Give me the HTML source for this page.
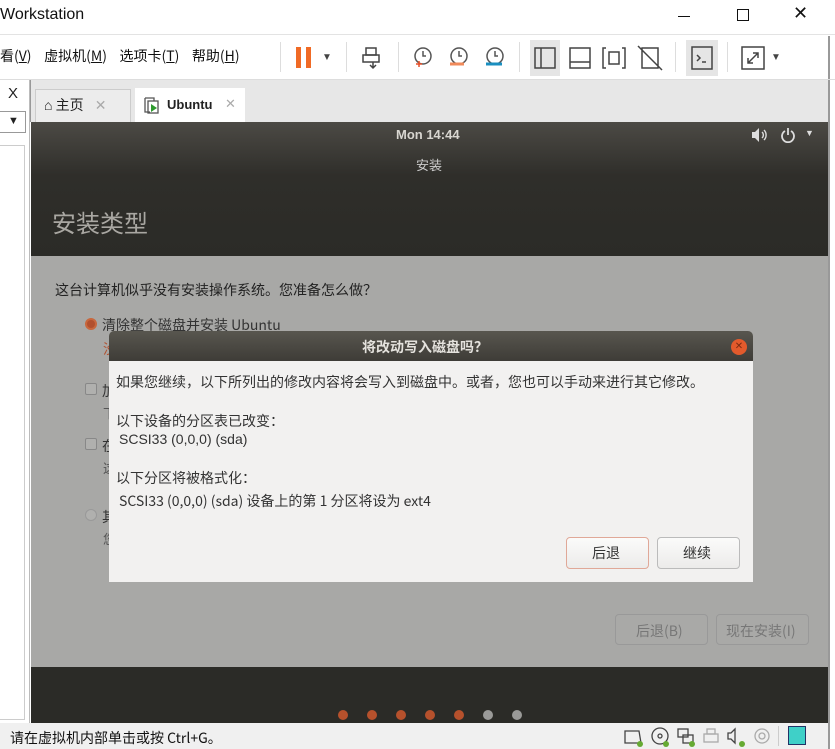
<!DOCTYPE html>
<html><head><meta charset="utf-8"><style>
*{margin:0;padding:0;box-sizing:border-box}
body{width:835px;height:749px;overflow:hidden;background:#fff;font-family:"Liberation Sans","Noto Sans CJK SC",sans-serif;position:relative;font-size:14px;color:#222}
.a{position:absolute}
.cn{font-family:"Noto Sans CJK SC",sans-serif}
</style></head><body>
<!-- title bar -->
<div class="a" style="left:0;top:0;width:835px;height:35px;background:#fff;border-bottom:1px solid #e3e3e3"></div>
<div class="a" style="left:0;top:6px;font-size:16px;color:#111">Workstation</div>
<div class="a" style="left:678px;top:16px;width:12px;height:1px;background:#111"></div>
<div class="a" style="left:737px;top:9px;width:12px;height:12px;border:1px solid #111"></div>
<div class="a" style="left:793px;top:3px;font-size:18px;color:#111">✕</div>
<!-- menu bar -->
<div class="a cn" style="left:0;top:46px;font-size:14px;color:#111;word-spacing:0">看(<u>V</u>)&nbsp;&nbsp;&nbsp;&nbsp;虚拟机(<u>M</u>)&nbsp;&nbsp;&nbsp;&nbsp;选项卡(<u>T</u>)&nbsp;&nbsp;&nbsp;&nbsp;帮助(<u>H</u>)</div>
<div class="a" style="left:280px;top:42px;width:1px;height:30px;background:#ddd"></div>
<div class="a" style="left:296px;top:47px;width:5px;height:21px;background:#f06a25"></div>
<div class="a" style="left:306px;top:47px;width:5px;height:21px;background:#f06a25"></div>
<div class="a" style="left:322px;top:52px;font-size:10px;color:#444">▼</div>
<div class="a" style="left:346px;top:42px;width:1px;height:30px;background:#ddd"></div>
<svg class="a" style="left:360px;top:44px" width="28" height="28" viewBox="0 0 28 28" fill="none" stroke="#444" stroke-width="1.5"><rect x="6" y="4" width="10" height="7"/><rect x="3" y="11" width="16" height="7"/><path d="M13 18v6M10 21l3 3 3-3"/></svg>
<div class="a" style="left:398px;top:42px;width:1px;height:30px;background:#ddd"></div>
<svg class="a" style="left:410px;top:45px" width="100" height="26" viewBox="0 0 100 26" fill="none" stroke-width="1.5"><circle cx="13" cy="11" r="8" stroke="#555"/><path d="M13 6v5h3" stroke="#555"/><path d="M6 19h6M9 16v6" stroke="#e8502a"/><circle cx="49" cy="11" r="8" stroke="#555"/><path d="M49 6v5h3" stroke="#555"/><path d="M40 19h14" stroke="#f08a5a" stroke-width="3"/><circle cx="85" cy="11" r="8" stroke="#555"/><path d="M85 6v5h3" stroke="#555"/><path d="M76 19h16" stroke="#1a8fc0" stroke-width="3"/></svg>
<div class="a" style="left:519px;top:42px;width:1px;height:30px;background:#ddd"></div>
<div class="a" style="left:530px;top:40px;width:30px;height:36px;background:#e5e5e5"></div>
<svg class="a" style="left:530px;top:44px" width="140" height="28" viewBox="0 0 140 28" fill="none" stroke="#444" stroke-width="1.5"><rect x="5" y="4" width="20" height="20"/><path d="M11 4v20"/><rect x="40" y="4" width="20" height="20"/><path d="M40 18h20"/><path d="M76 4h-3v20h3M92 4h3v20h-3"/><rect x="79" y="8" width="10" height="12"/><path d="M112 4h16v20h-16zM108 2l24 24" /></svg>
<div class="a" style="left:675px;top:42px;width:1px;height:30px;background:#ddd"></div>
<div class="a" style="left:686px;top:40px;width:32px;height:36px;background:#e5e5e5"></div>
<svg class="a" style="left:689px;top:44px" width="26" height="28" viewBox="0 0 26 28" fill="none" stroke="#444" stroke-width="1.5"><rect x="3" y="3" width="20" height="22"/><path d="M8 11l3 3-3 3M13 18h4"/></svg>
<div class="a" style="left:727px;top:42px;width:1px;height:30px;background:#ddd"></div>
<svg class="a" style="left:739px;top:44px" width="28" height="28" viewBox="0 0 28 28" fill="none" stroke="#444" stroke-width="1.5"><rect x="3" y="3" width="22" height="22"/><path d="M9 19l10-10M14 9h5v5M9 14v5h5"/></svg>
<div class="a" style="left:771px;top:52px;font-size:10px;color:#444">▼</div>
<div class="a" style="left:828px;top:36px;width:2px;height:713px;background:#999"></div>
<div class="a" style="left:0;top:79px;width:835px;height:1px;background:#ddd"></div>
<!-- left panel -->
<div class="a" style="left:0;top:80px;width:30px;height:643px;background:#fff;border-right:1px solid #bbb"></div>
<div class="a" style="left:8px;top:85px;font-size:15px;color:#222">X</div>
<div class="a" style="left:0;top:111px;width:26px;height:22px;border:1px solid #999;border-left:none"></div>
<div class="a" style="left:8px;top:115px;font-size:11px">▼</div>
<div class="a" style="left:0;top:145px;width:25px;height:575px;border:1px solid #ccc;border-left:none"></div>
<!-- tabs bar -->
<div class="a" style="left:30px;top:80px;width:798px;height:42px;background:#e7e7e7;border-left:1px solid #999"></div>
<div class="a" style="left:35px;top:89px;width:96px;height:33px;background:#ececec;border:1px solid #ccc;border-bottom:none"></div>
<div class="a cn" style="left:44px;top:95px;font-size:14px;color:#222">⌂ 主页 <span style="color:#aaa;margin-left:8px">✕</span></div>
<div class="a" style="left:135px;top:88px;width:110px;height:34px;background:#fff"></div>
<svg class="a" style="left:142px;top:95px" width="20" height="20"><path d="M3 3h9v3M3 3v14h5" fill="none" stroke="#555" stroke-width="1.3"/><rect x="6" y="6" width="10" height="12" fill="none" stroke="#555" stroke-width="1.3"/><path d="M9 9l6 4-6 4z" fill="#2e9a2e"/></svg>
<div class="a" style="left:167px;top:97px;font-size:13px;font-weight:bold">Ubuntu</div>
<div class="a" style="left:225px;top:96px;font-size:13px;color:#aaa">✕</div>
<!-- VM screen -->
<div class="a" style="left:31px;top:122px;width:797px;height:134px;background:linear-gradient(#4c4a45,#2f2e2a 40%,#2b2b27)"></div>
<div class="a" style="left:396px;top:127px;font-size:13px;font-weight:bold;color:#d8d6d0">Mon 14:44</div>
<svg class="a" style="left:751px;top:127px" width="18" height="16" fill="#ddd" stroke="#ddd" stroke-width="1.4"><path d="M1 5h3l4-4v14l-4-4H1z" stroke="none"/><path d="M11 5a4 4 0 0 1 0 6M13 3a7 7 0 0 1 0 10" fill="none"/></svg>
<svg class="a" style="left:780px;top:127px" width="16" height="16" fill="none" stroke="#ddd" stroke-width="1.8"><path d="M5 4a6 6 0 1 0 6 0M8 1v7"/></svg>
<div class="a" style="left:805px;top:128px;font-size:9px;color:#ddd">▼</div>
<div class="a cn" style="left:416px;top:155px;font-size:13px;color:#ccc">安装</div>
<div class="a cn" style="left:52px;top:204px;font-size:24px;color:#a9a7a2">安装类型</div>
<div class="a" style="left:31px;top:256px;width:797px;height:411px;background:#a8a8a6"></div>
<div class="a cn" style="left:55px;top:280px;font-size:14px;color:#222">这台计算机似乎没有安装操作系统。您准备怎么做？</div>
<div class="a" style="left:85px;top:318px;width:12px;height:12px;border-radius:50%;background:#b2502e;border:2px solid #c8673d"></div>
<div class="a cn" style="left:102px;top:315px;font-size:14px;color:#333">清除整个磁盘并安装 Ubuntu</div>
<div class="a cn" style="left:103px;top:339px;font-size:14px;color:#b2502e">没</div>
<div class="a cn" style="left:102px;top:381px;font-size:14px;color:#333">加</div>
<div class="a cn" style="left:103px;top:403px;font-size:13px;color:#555">下</div>
<div class="a cn" style="left:102px;top:436px;font-size:14px;color:#333">在</div>
<div class="a cn" style="left:103px;top:458px;font-size:13px;color:#555">这</div>
<div class="a cn" style="left:102px;top:507px;font-size:14px;color:#333">其</div>
<div class="a cn" style="left:103px;top:529px;font-size:13px;color:#555">您</div>
<div class="a" style="left:85px;top:383px;width:12px;height:12px;border:1px solid #888;border-radius:2px;background:#b0b0ae"></div>
<div class="a" style="left:85px;top:438px;width:12px;height:12px;border:1px solid #888;border-radius:2px;background:#b0b0ae"></div>
<div class="a" style="left:85px;top:509px;width:12px;height:12px;border:1px solid #999;border-radius:50%;background:#b0b0ae"></div>
<div class="a" style="left:615px;top:614px;width:93px;height:31px;border:1px solid #999;border-radius:4px;background:#a9a9a7"></div>
<div class="a cn" style="left:636px;top:621px;font-size:14px;color:#777">后退(B)</div>
<div class="a" style="left:716px;top:614px;width:93px;height:31px;border:1px solid #999;border-radius:4px;background:#a9a9a7"></div>
<div class="a cn" style="left:726px;top:621px;font-size:14px;color:#777">现在安装(I)</div>
<div class="a" style="left:31px;top:667px;width:797px;height:56px;background:#2b2b27"></div>
<div class="a" style="left:338px;top:710px;width:10px;height:10px;border-radius:50%;background:#b6512c"></div>
<div class="a" style="left:367px;top:710px;width:10px;height:10px;border-radius:50%;background:#b6512c"></div>
<div class="a" style="left:396px;top:710px;width:10px;height:10px;border-radius:50%;background:#b6512c"></div>
<div class="a" style="left:425px;top:710px;width:10px;height:10px;border-radius:50%;background:#b6512c"></div>
<div class="a" style="left:454px;top:710px;width:10px;height:10px;border-radius:50%;background:#b6512c"></div>
<div class="a" style="left:483px;top:710px;width:10px;height:10px;border-radius:50%;background:#9a9a98"></div>
<div class="a" style="left:512px;top:710px;width:10px;height:10px;border-radius:50%;background:#9a9a98"></div>
<!-- dialog -->
<div class="a" style="left:109px;top:331px;width:644px;height:30px;background:linear-gradient(#58564f,#3e3c37);border-radius:5px 5px 0 0"></div>
<div class="a cn" style="left:362px;top:337px;font-size:14px;color:#e4e2dd;font-weight:bold">将改动写入磁盘吗？</div>
<div class="a" style="left:731px;top:339px;width:16px;height:16px;border-radius:50%;background:#e25a2c;color:#7a2a10;font-size:10px;text-align:center;line-height:16px">✕</div>
<div class="a" style="left:109px;top:361px;width:644px;height:221px;background:#f2f1f0"></div>
<div class="a cn" style="left:116px;top:372px;font-size:14px;color:#333">如果您继续，以下所列出的修改内容将会写入到磁盘中。或者，您也可以手动来进行其它修改。</div>
<div class="a cn" style="left:116px;top:411px;font-size:14px;color:#333">以下设备的分区表已改变：</div>
<div class="a" style="left:119px;top:431px;font-size:14px;color:#333">SCSI33 (0,0,0) (sda)</div>
<div class="a cn" style="left:116px;top:468px;font-size:14px;color:#333">以下分区将被格式化：</div>
<div class="a cn" style="left:119px;top:491px;font-size:14px;color:#333">SCSI33 (0,0,0) (sda) 设备上的第 1 分区将设为 ext4</div>
<div class="a" style="left:566px;top:537px;width:83px;height:32px;border:1px solid #e0a898;border-radius:4px;background:linear-gradient(#fbfbfa,#ecebea)"></div>
<div class="a cn" style="left:592px;top:543px;font-size:14px;color:#333">后退</div>
<div class="a" style="left:657px;top:537px;width:83px;height:32px;border:1px solid #bbb;border-radius:4px;background:linear-gradient(#fbfbfa,#ecebea)"></div>
<div class="a cn" style="left:683px;top:543px;font-size:14px;color:#333">继续</div>
<!-- status bar -->
<div class="a" style="left:0;top:723px;width:828px;height:26px;background:#f0f0f0"></div>
<div class="a cn" style="left:10px;top:728px;font-size:14px;color:#111">请在虚拟机内部单击或按 Ctrl+G。</div>
<svg class="a" style="left:622px;top:726px" width="150" height="22" fill="none" stroke="#444" stroke-width="1.3"><path d="M3 5h14l2 12H3z"/><circle cx="18" cy="18" r="3" fill="#6a3" stroke="none"/><circle cx="38" cy="10" r="8"/><circle cx="38" cy="10" r="2"/><circle cx="44" cy="18" r="3" fill="#6a3" stroke="none"/><rect x="56" y="3" width="10" height="8"/><rect x="61" y="9" width="10" height="8"/><circle cx="70" cy="18" r="3" fill="#6a3" stroke="none"/><rect x="82" y="8" width="14" height="8" stroke="#aaa"/><rect x="85" y="3" width="8" height="5" stroke="#aaa"/><path d="M106 7h3l4-4v14l-4-4h-3z"/><circle cx="120" cy="18" r="3" fill="#6a3" stroke="none"/><circle cx="140" cy="10" r="7" stroke="#aaa"/><circle cx="140" cy="10" r="3" stroke="#aaa"/></svg>
<div class="a" style="left:778px;top:726px;width:1px;height:20px;background:#ccc"></div>
<div class="a" style="left:788px;top:726px;width:18px;height:19px;background:#3fd0c8;border:1px solid #236"></div>
</body></html>
